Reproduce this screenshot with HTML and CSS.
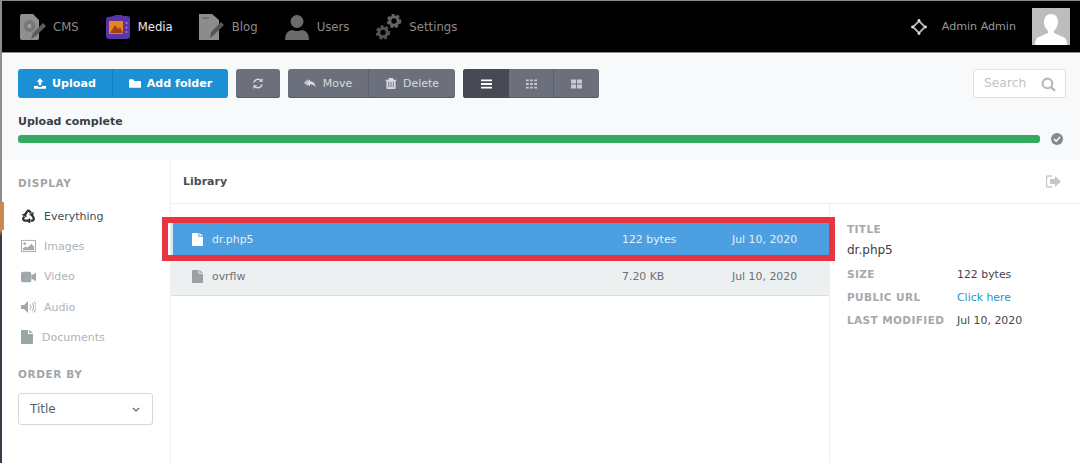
FILE: index.html
```html
<!DOCTYPE html>
<html lang="en">
<head>
<meta charset="utf-8">
<title>Media</title>
<link rel="stylesheet" href="styles.css">
</head>
<body>
<svg class="defs" width="0" height="0" aria-hidden="true">
  <defs>
    <symbol id="file" viewBox="0 0 12 14"><path d="M0 1q0-1 1-1h6v4h5v9q0 1-1 1H1q-1 0-1-1zM8 0l4 3H8z" fill="currentColor"/></symbol>
    <g id="rec-arm">
      <path d="M3.800 7.200 6.300 3Q8 1 9.700 3L10.700 4.700" fill="none" stroke="#2e3338" stroke-width="2.600"/>
      <path d="M8.200 6.800 13.200 8 14 3z" fill="#2e3338"/>
    </g>
  </defs>
</svg>
<div class="edge"></div>
<header class="topbar">
  <nav class="nav">
    <a class="nav-item nav-cms">
      <svg class="nav-icon" viewBox="0 0 26 26"><path d="M0 2q0-2 2-2h11l6 6v18q0 2-2 2H2q-2 0-2-2z" fill="#8f8f8f"/><circle cx="9.500" cy="12" r="6" fill="#777"/><circle cx="9.500" cy="12" r="2" fill="#a0a0a0"/><path d="M11 25l2-6 10-10 3 3-10 10z" fill="#5c5c5c"/></svg>
      <span>CMS</span>
    </a>
    <a class="nav-item nav-media">
      <svg class="nav-icon" viewBox="0 0 26 26"><path d="M3 3l6-1 1-1h7l1 1 4 0q3 0 3 3v17q0 3-3 3H4q-3 0-3-3V6q0-3 2-3z" fill="#5b34a8"/><rect x="4" y="7" width="14" height="13" fill="#e8861c"/><path d="M5 19l5-8 3 4 2-2 3 6z" fill="#a3400f"/><g fill="#9c83d8"><circle cx="21.500" cy="9" r="1"/><circle cx="21.500" cy="13.500" r="1"/><circle cx="21.500" cy="18" r="1"/></g></svg>
      <span>Media</span>
    </a>
    <a class="nav-item nav-blog">
      <svg class="nav-icon" viewBox="0 0 26 26"><path d="M0 0h13l7 6v20H0z" fill="#8c8c8c"/><path d="M3 4h7" stroke="#555" stroke-width="1"/><path d="M11 24l1-6 10-10 3 3-10 10z" fill="#555"/></svg>
      <span>Blog</span>
    </a>
    <a class="nav-item nav-users">
      <svg class="nav-icon" viewBox="0 0 26 26"><circle cx="13" cy="7.500" r="6.500" fill="#6b6b6b"/><path d="M1 26q0-9 7-10 5 2 10 0 7 1 7 10z" fill="#6b6b6b"/></svg>
      <span>Users</span>
    </a>
    <a class="nav-item nav-settings">
      <svg class="nav-icon" viewBox="0 0 26 26" fill="none"><circle cx="18" cy="7" r="4.200" stroke="#666" stroke-width="3"/><circle cx="18" cy="7" r="6.200" stroke="#666" stroke-width="2" stroke-dasharray="3 2.200"/><circle cx="7" cy="18.500" r="4.200" stroke="#555" stroke-width="3"/><circle cx="7" cy="18.500" r="6.200" stroke="#555" stroke-width="2" stroke-dasharray="3 2.200"/></svg>
      <span>Settings</span>
    </a>
  </nav>
  <div class="user">
    <svg class="target" viewBox="0 0 16 16"><path d="M8 2 14 8 8 14 2 8z" fill="none" stroke="#b5b5b5" stroke-width="1.800"/><g fill="#e0e0e0"><circle cx="8" cy="1.500" r="1.400"/><circle cx="8" cy="14.500" r="1.400"/><circle cx="1.500" cy="8" r="1.400"/><circle cx="14.500" cy="8" r="1.400"/></g></svg>
    <span class="user-name">Admin Admin</span>
    <svg class="avatar" viewBox="0 0 38 37"><rect width="38" height="37" fill="#bdbdbd"/><path d="M19 6c5 0 7 4 7 8 0 4-2 7-4 9v2l9 4c3 1 4 4 4 8H3c0-4 1-7 4-8l9-4v-2c-2-2-4-5-4-9 0-4 2-8 7-8z" fill="#fff"/></svg>
  </div>
</header>

<section class="toolbar">
  <div class="actions">
    <div class="btn-group btn-blue">
      <button class="btn btn-upload">
        <svg class="ico" viewBox="0 0 14 12"><path d="M7 0l4 4H8.500v4h-3V4H3zM0 9h5v1h4V9h5v3H0z" fill="currentColor"/></svg>
        <span>Upload</span>
      </button>
      <button class="btn btn-folder">
        <svg class="ico" viewBox="0 0 14 12"><path d="M0 2q0-1 1-1h4l1 2h7q1 0 1 1v6q0 1-1 1H1q-1 0-1-1z" fill="currentColor"/></svg>
        <span>Add folder</span>
      </button>
    </div>
    <div class="btn-group btn-gray">
      <button class="btn btn-refresh">
        <svg class="ico" viewBox="0 0 12 12" fill="none"><path d="M1.500 5a4.600 4.600 0 0 1 8-2M10.500 7a4.600 4.600 0 0 1-8 2" stroke="currentColor" stroke-width="1.600"/><path d="M11 0v4H7zM1 12V8h4z" fill="currentColor"/></svg>
      </button>
    </div>
    <div class="btn-group btn-gray">
      <button class="btn btn-move">
        <svg class="ico" viewBox="0 0 14 12"><path d="M7 1v2.500c4 0 6.500 3 6.500 7.500-1-3-3.500-4-6.500-4v2.500L2.500 5zM4.500 1v1.500L1.800 5l2.700 2.500V9L0 5z" fill="currentColor"/></svg>
        <span>Move</span>
      </button>
      <button class="btn btn-delete">
        <svg class="ico" viewBox="0 0 12 12"><path d="M4 0h4l1 2h3v1h-1v8q0 1-1 1H2q-1 0-1-1V3H0V2h3zM3 4v6h1V4zm2.500 0v6h1V4zM8 4v6h1V4z" fill="currentColor" fill-rule="evenodd"/></svg>
        <span>Delete</span>
      </button>
    </div>
    <div class="btn-group btn-gray">
      <button class="btn btn-view btn-active">
        <svg class="ico" viewBox="0 0 12 10"><path d="M0 0h12v2H0zM0 4h12v2H0zM0 8h12v2H0z" fill="currentColor"/></svg>
      </button>
      <button class="btn btn-view">
        <svg class="ico" viewBox="0 0 12 10"><path d="M0 0h3v2H0zM4.500 0h3v2h-3zM9 0h3v2H9zM0 4h3v2H0zM4.500 4h3v2h-3zM9 4h3v2H9zM0 8h3v2H0zM4.500 8h3v2h-3zM9 8h3v2H9z" fill="currentColor"/></svg>
      </button>
      <button class="btn btn-view">
        <svg class="ico" viewBox="0 0 12 10"><path d="M0 0h5.500v4.500H0zM6.500 0H12v4.500H6.500zM0 5.500h5.500V10H0zM6.500 5.500H12V10H6.500z" fill="currentColor"/></svg>
      </button>
    </div>
    <div class="search">
      <span>Search</span>
      <svg class="search-ico" viewBox="0 0 14 14" fill="none"><circle cx="6" cy="6" r="4.500" stroke="#b5b8bd" stroke-width="2"/><path d="M9.500 9.500 13 13" stroke="#b5b8bd" stroke-width="2.400"/></svg>
    </div>
  </div>
  <div class="progress-label">Upload complete</div>
  <div class="progress-row">
    <div class="progress"></div>
    <svg class="check" viewBox="0 0 12 12"><circle cx="6" cy="6" r="6" fill="#85898e"/><path d="M3 6l2.200 2.200L9 4" fill="none" stroke="#fff" stroke-width="1.500"/></svg>
  </div>
</section>

<main class="main">
  <aside class="sidebar">
    <h3 class="side-title">DISPLAY</h3>
    <ul class="side-list">
      <li class="side-item side-active">
        <svg class="side-ico" viewBox="0 0 16 16">
          <use href="#rec-arm"/>
          <use href="#rec-arm" transform="rotate(120 8 8.800)"/>
          <use href="#rec-arm" transform="rotate(240 8 8.800)"/>
        </svg>
        <span>Everything</span>
      </li>
      <li class="side-item">
        <svg class="side-ico" viewBox="0 0 16 13"><path d="M0 0h16v13H0z" fill="#a5abae"/><path d="M1 1h14v11H1z" fill="#fff"/><circle cx="4" cy="4" r="1.500" fill="#a5abae"/><path d="M2 11V9l3-2 2 1 4-4 3 3v4z" fill="#a5abae"/></svg>
        <span>Images</span>
      </li>
      <li class="side-item">
        <svg class="side-ico" viewBox="0 0 16 11"><rect width="11" height="11" rx="2" fill="#a0a8ab"/><path d="M11 4l5-3v9l-5-3z" fill="#a0a8ab"/></svg>
        <span>Video</span>
      </li>
      <li class="side-item">
        <svg class="side-ico" viewBox="0 0 15 12"><path d="M0 4h3l4-4v12L3 8H0z" fill="#a0a8ab"/><path d="M9 3.500q2 2.500 0 5M11 2q3.500 4 0 8M13 .5q4.500 5.500 0 11" fill="none" stroke="#a0a8ab"/></svg>
        <span>Audio</span>
      </li>
      <li class="side-item side-item-doc">
        <svg class="side-ico-doc"><use href="#file"/></svg>
        <span>Documents</span>
      </li>
    </ul>
    <h3 class="side-title side-title-order">ORDER BY</h3>
    <div class="select">
      <span>Title</span>
      <svg class="chev" viewBox="0 0 8 5" fill="none"><path d="M1 1l3 3 3-3" stroke="#5a6470" stroke-width="1.200"/></svg>
    </div>
  </aside>

  <div class="content">
    <div class="content-head">
      <span class="content-title">Library</span>
      <svg class="exit" viewBox="0 0 16 13"><path d="M6 1H2q-1.500 0-1.500 1.500v8Q.5 12 2 12h4" fill="none" stroke="#c4c6c8" stroke-width="1.400"/><path d="M9 1l6 5.500L9 12V9H4V4h5z" fill="#c4c6c8"/></svg>
    </div>
    <div class="content-body">
      <div class="list">
        <div class="row row-selected">
          <svg class="row-ico"><use href="#file"/></svg>
          <span class="row-name">dr.php5</span>
          <span class="row-size">122 bytes</span>
          <span class="row-date">Jul 10, 2020</span>
        </div>
        <div class="row row-plain">
          <svg class="row-ico"><use href="#file"/></svg>
          <span class="row-name">ovrflw</span>
          <span class="row-size">7.20 KB</span>
          <span class="row-date">Jul 10, 2020</span>
        </div>
        <div class="highlight"></div>
      </div>
      <div class="details">
        <div class="d-label">TITLE</div>
        <div class="d-title">dr.php5</div>
        <dl class="d-grid">
          <dt class="d-label">SIZE</dt><dd>122 bytes</dd>
          <dt class="d-label">PUBLIC URL</dt><dd class="d-link">Click here</dd>
          <dt class="d-label">LAST MODIFIED</dt><dd>Jul 10, 2020</dd>
        </dl>
      </div>
    </div>
  </div>
</main>
</body>
</html>
```

FILE: styles.css
```css
* { box-sizing: border-box; }
html, body { margin: 0; height: 100%; overflow: hidden; }
body {
  position: relative;
  display: flex;
  flex-direction: column;
  height: 463px;
  font-family: "DejaVu Sans", sans-serif;
  font-size: 11px;
  color: #3a3f47;
  background: #fff;
}
.defs { position: absolute; }

.edge {
  position: absolute;
  left: 0;
  top: 0;
  width: 2px;
  height: 463px;
  z-index: 3;
  background: linear-gradient(#8d8d8d 0, #8d8d8d 202px, #c98a4e 202px, #c98a4e 230px, #3b3b49 236px, #3b3b49 100%);
}

/* top bar */
.topbar {
  flex: none;
  height: 53px;
  display: flex;
  justify-content: space-between;
  align-items: center;
  background: #000;
  border-top: 1px solid #8a8a8a;
  border-bottom: 1px solid #8a8a8a;
  padding: 0 10px 0 20px;
}
.nav { display: flex; align-items: center; }
.nav-item { display: flex; align-items: center; gap: 7px; color: #8b8b8b; font-size: 11.700px; }
.nav-icon { width: 26px; height: 26px; display: block; }
.nav-media { color: #e6e6e6; margin-left: 26px; }
.nav-blog { margin-left: 26px; }
.nav-users { margin-left: 26px; }
.nav-settings { margin-left: 27px; }
.user { display: flex; align-items: center; }
.target { width: 16px; height: 16px; }
.user-name { margin-left: 15px; color: #999; font-size: 11.100px; }
.avatar { width: 38px; height: 37px; margin-left: 16px; display: block; }

/* toolbar */
.toolbar {
  flex: none;
  height: 107px;
  background: #f8f9fb;
  padding: 16px 14px 0 18px;
}
.actions { display: flex; gap: 8px; height: 29px; }
.btn-group { display: flex; border-radius: 3px; overflow: hidden; }
.btn {
  display: flex;
  align-items: center;
  justify-content: center;
  gap: 6px;
  height: 29px;
  padding: 0;
  border: 0;
  color: inherit;
  background: none;
  font: inherit;
}
.ico { width: 12px; height: 11px; display: block; }
.btn-blue { background: #1c90d4; color: #fff; font-weight: 700; font-size: 11.100px; }
.btn-gray { background: #6c707c; color: #d8dade; box-shadow: inset 0 -1px #555965; }
.btn-upload { width: 95px; border-right: 1px solid #1682c3; }
.btn-folder { width: 115px; }
.btn-refresh { width: 44px; }
.btn-move { width: 81px; border-right: 1px solid #5e626e; gap: 7px; }
.btn-delete { width: 86px; }
.btn-view { width: 45px; color: #c7cad0; border-right: 1px solid #5e626e; }
.btn-view .ico { width: 11px; height: 10px; }
.btn-view:last-child { border-right: 0; }
.btn-active { width: 46px; background: #474a54; color: #fff; border-right: 0; }
.search {
  margin-left: auto;
  width: 93px;
  display: flex;
  align-items: center;
  justify-content: space-between;
  padding: 0 9px 2px 10px;
  background: #fff;
  border: 1px solid #dfe1e4;
  border-radius: 3px;
  color: #c2c4c8;
  font-size: 12.300px;
}
.search-ico { width: 15px; height: 15px; margin-top: 4px; }
.progress-label { margin-top: 17px; font-weight: 700; line-height: 14px; }
.progress-row { display: flex; align-items: center; margin-top: 5px; height: 9px; }
.progress { width: 1022px; height: 8px; background: #33a962; border-radius: 3px; }
.check { width: 12px; height: 12px; margin-left: 11px; }

/* body */
.main { flex: 1; display: flex; min-height: 0; }
.sidebar { flex: none; width: 171px; border-right: 1px solid #edeff0; padding: 17px 17px 0 18px; }
.side-title { margin: 0; font-size: 10.500px; font-weight: 700; letter-spacing: .6px; line-height: 12px; color: #a0a5a8; }
.side-title-order { margin-top: 16px; }
.side-list { list-style: none; margin: 12px 0 0; padding: 0; }
.side-item { position: relative; display: flex; align-items: center; gap: 8px; height: 30.300px; padding-left: 3px; color: #aeb3b6; }
.side-active { color: #444a50; }
.side-active::before {
  content: "";
  position: absolute;
  left: -18px;
  top: 1px;
  width: 4px;
  height: 28px;
  background: #c98a4e;
}
.side-ico { width: 15px; height: 14px; display: block; }
.side-ico-doc { width: 12px; height: 14px; color: #9aa5a7; display: block; }
.side-item-doc { gap: 9px; padding-left: 3px; }
.select {
  margin-top: 13px;
  height: 32px;
  display: flex;
  align-items: center;
  justify-content: space-between;
  padding: 0 12px 0 11px;
  border: 1px solid #d5d8dc;
  border-radius: 3px;
  font-size: 12px;
  color: #4f5f75;
}
.chev { width: 8px; height: 5px; }

.content { flex: 1; min-width: 0; display: flex; flex-direction: column; }
.content-head {
  flex: none;
  height: 44px;
  display: flex;
  align-items: center;
  justify-content: space-between;
  padding: 0 18px 0 12px;
  border-bottom: 1px solid #eff0f1;
}
.content-title { font-weight: 700; color: #4a4f57; }
.exit { width: 16px; height: 13px; }
.content-body { flex: 1; display: flex; min-height: 0; }

.list { position: relative; flex: none; width: 658px; padding-top: 16px; }
.row { display: flex; align-items: center; padding-left: 21px; font-size: 10.900px; }
.row-ico { width: 11px; height: 13px; display: block; }
.row-name { margin-left: 9px; width: 410px; }
.row-size { width: 110px; }
.row-selected { height: 38px; background: #4c9fe0; color: #e4f0fa; border-left: 2px solid #d7e6f2; padding-left: 19px; }
.row-selected .row-ico { color: #fff; }
.row-plain { height: 38px; background: #edf0f1; color: #6b7075; border-bottom: 1px solid #dcdfe1; }
.row-plain .row-ico { color: #9aa0a3; }
.highlight {
  position: absolute;
  left: -9px;
  top: 13px;
  width: 673px;
  height: 44px;
  border: 6px solid #e8343f;
  pointer-events: none;
}

.details { flex: 1; border-left: 1px solid #eceef0; padding: 19px 0 0 17px; }
.d-label { font-size: 10.500px; font-weight: 700; letter-spacing: .4px; color: #a5a9ac; line-height: 13px; }
.d-title { margin-top: 7px; font-size: 12px; line-height: 14px; color: #3c4046; }
.d-grid { display: grid; grid-template-columns: 110px 1fr; grid-auto-rows: 23px; align-items: center; margin: 6px 0 0; }
.d-grid dd { margin: 0; font-size: 10.900px; color: #43474c; }
.d-grid .d-link { color: #2b93bd; }
```
